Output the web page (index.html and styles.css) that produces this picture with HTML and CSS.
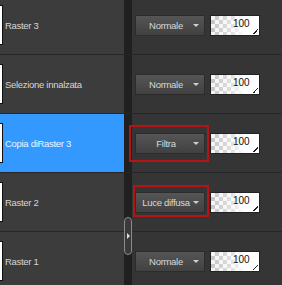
FILE: index.html
```html
<!DOCTYPE html>
<html lang="it">
<head>
    <meta charset="UTF-8">
    <meta name="viewport" content="width=device-width, initial-scale=1.0">
    <title>Livelli</title>
    <link rel="stylesheet" href="styles.css">
</head>
<body>
    <div class="layers">
        <div class="layer first">
            <div class="layer-name"><span class="thumb"></span>Raster 3</div>
            <div class="strip"></div>
            <div class="layer-ctrl">
                <div class="blend"><span class="blend-label">Normale</span><span class="arrow"></span></div>
                <div class="opacity"><span class="opacity-value">100</span><span class="grip"></span></div>
            </div>
        </div>
        <div class="layer">
            <div class="layer-name"><span class="thumb"></span>Selezione innalzata</div>
            <div class="strip"></div>
            <div class="layer-ctrl">
                <div class="blend"><span class="blend-label">Normale</span><span class="arrow"></span></div>
                <div class="opacity"><span class="opacity-value">100</span><span class="grip"></span></div>
            </div>
        </div>
        <div class="layer selected">
            <div class="layer-name"><span class="thumb"></span>Copia diRaster 3</div>
            <div class="strip"></div>
            <div class="layer-ctrl">
                <div class="blend marked mark-a"><span class="blend-label">Filtra</span><span class="arrow"></span></div>
                <div class="opacity"><span class="opacity-value">100</span><span class="grip"></span></div>
            </div>
        </div>
        <div class="layer">
            <div class="layer-name"><span class="thumb"></span>Raster 2</div>
            <div class="strip"></div>
            <div class="layer-ctrl">
                <div class="blend marked mark-b"><span class="blend-label">Luce diffusa</span><span class="arrow"></span></div>
                <div class="opacity"><span class="opacity-value">100</span><span class="grip"></span></div>
            </div>
        </div>
        <div class="layer">
            <div class="layer-name"><span class="thumb"></span>Raster 1</div>
            <div class="strip"></div>
            <div class="layer-ctrl">
                <div class="blend"><span class="blend-label">Normale</span><span class="arrow"></span></div>
                <div class="opacity"><span class="opacity-value">100</span><span class="grip"></span></div>
            </div>
        </div>

        <div class="splitter"><span class="splitter-arrow"></span></div>
    </div>
</body>
</html>
```

FILE: styles.css
```css
* {
    margin: 0;
    padding: 0;
    box-sizing: border-box;
}

html, body {
    width: 282px;
    height: 285px;
    overflow: hidden;
}

body {
    font-family: 'Liberation Sans', Arial, sans-serif;
    font-size: 9.5px;
    letter-spacing: -0.3px;
    background: #353535;
}

.layers {
    position: relative;
    height: 285px;
}

.layer {
    display: flex;
    height: 59px;
    border-bottom: 1px solid #262626;
}

.layer.first {
    margin-top: -4px;
}

.layer-name {
    width: 124px;
    display: flex;
    align-items: center;
    background: #3c3c3c;
    color: #d6d6d6;
    overflow: hidden;
    white-space: nowrap;
}

.selected .layer-name {
    background: #3399ff;
    color: #eef5ff;
}

.thumb {
    flex: none;
    width: 40px;
    height: 40px;
    margin-left: -37px;
    margin-right: 2px;
    background: #fff;
    border: 1px solid #111;
}

.strip {
    width: 8px;
    background: #202020;
}

.layer-ctrl {
    flex: 1;
    display: flex;
    align-items: center;
    gap: 5px;
    padding-left: 3px;
    background: #353535;
}

.blend {
    position: relative;
    width: 70px;
    height: 21px;
    display: flex;
    align-items: center;
    background: linear-gradient(#555555, #414141);
    border: 1px solid #2c2c2c;
    color: #d8d8d8;
    white-space: nowrap;
}

.blend-label {
    flex: 1;
    text-align: center;
    padding-left: 3px;
}

.arrow {
    flex: none;
    width: 0;
    height: 0;
    margin-right: 5px;
    border-left: 3px solid transparent;
    border-right: 3px solid transparent;
    border-top: 3px solid #d0d0d0;
}

.marked::after {
    content: "";
    position: absolute;
    border: 2px solid #b31414;
}

.mark-a::after {
    left: -7px;
    right: -5px;
    top: -9px;
    bottom: -9px;
}

.mark-b::after {
    left: -3px;
    right: -5px;
    top: -8px;
    bottom: -5px;
}

.opacity {
    position: relative;
    width: 50px;
    height: 21px;
    border: 1px solid #222;
    background:
        linear-gradient(90deg, rgba(255, 255, 255, 0) 0%, rgba(255, 255, 255, 0.5) 45%, #fff 70%),
        repeating-conic-gradient(#c4c4c4 0 25%, #f4f4f4 0 50%) 0 0 / 8px 8px;
    color: #111;
    font-size: 10px;
    letter-spacing: 0;
}

.opacity-value {
    position: absolute;
    left: 22px;
    top: 2px;
}

.grip {
    position: absolute;
    right: 1px;
    bottom: 1px;
    width: 5px;
    height: 5px;
    background: linear-gradient(135deg, transparent 45%, #222 45%, #222 60%, transparent 60%);
}

.splitter {
    position: absolute;
    left: 124px;
    top: 221px;
    width: 8px;
    height: 38px;
    border: 1px solid #8a8a8a;
    border-radius: 4px;
    background: #3a3a3a;
    display: flex;
    align-items: center;
    justify-content: center;
}

.splitter-arrow {
    width: 0;
    height: 0;
    border-top: 3px solid transparent;
    border-bottom: 3px solid transparent;
    border-left: 3px solid #e0e0e0;
}
```
